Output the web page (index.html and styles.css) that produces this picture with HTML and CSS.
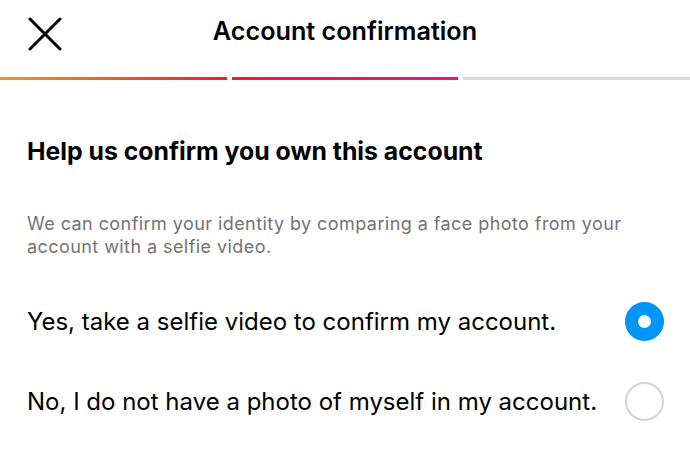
FILE: index.html
```html
<!DOCTYPE html>
<html>
<head>
<meta charset="utf-8">
<link rel="stylesheet" href="styles.css">
</head>
<body>
<div class="screen">
  <header class="topbar">
    <div class="close">
      <svg width="34" height="34" viewBox="0 0 34 34"><path d="M2 2 L32 32 M32 2 L2 32" stroke="#000" stroke-width="3" stroke-linecap="round" fill="none"/></svg>
    </div>
    <h1 class="title">Account confirmation</h1>
  </header>
  <div class="progress">
    <div class="seg seg1"></div>
    <div class="seg seg2"></div>
    <div class="seg seg3"></div>
  </div>
  <main class="content">
    <h2 class="heading">Help us confirm you own this account</h2>
    <p class="desc">We can confirm your identity by comparing a face photo from your account with a selfie video.</p>
    <div class="option first">
      <span class="label">Yes, take a selfie video to confirm my account.</span>
      <span class="radio checked"></span>
    </div>
    <div class="option">
      <span class="label">No, I do not have a photo of myself in my account.</span>
      <span class="radio"></span>
    </div>
  </main>
</div>
</body>
</html>
```
FILE: styles.css
```css
html, body {
  margin: 0;
  padding: 0;
  background: #fff;
}
body {
  font-family: Inter, Roboto, "Liberation Sans", sans-serif;
  color: #000;
  width: 690px;
  height: 468px;
  overflow: hidden;
}
.topbar {
  height: 77px;
  display: flex;
  align-items: center;
  justify-content: center;
  position: relative;
}
.close {
  position: absolute;
  left: 28px;
  top: 17px;
  width: 34px;
  height: 34px;
}
.title {
  margin: 0 0 15px 0;
  font-size: 25.2px;
  font-weight: 600;
  letter-spacing: 0;
}
.progress {
  display: flex;
  gap: 5px;
  height: 3px;
}
.seg {
  flex: 1;
}
.seg1 { background: linear-gradient(90deg, #f8951a, #ff1a1a); }
.seg2 { background: linear-gradient(90deg, #ff1437, #ff0a8c); }
.seg3 { background: #dbdbdb; }
.content {
  padding: 0 27px;
}
.heading {
  margin: 55px 0 0 0;
  font-size: 24.8px;
  font-weight: 700;
  line-height: 32px;
  letter-spacing: 0;
}
.desc {
  margin: 46px 0 0 0;
  font-size: 18px;
  line-height: 22.5px;
  color: #737373;
  font-weight: 400;
  letter-spacing: 0.43px;
}
.option {
  display: flex;
  align-items: center;
  justify-content: space-between;
  height: 80px;
}
.option.first { margin-top: 23px; }
.label {
  font-size: 24px;
  letter-spacing: 0;
}
.radio {
  flex: none;
  width: 39px;
  height: 39px;
  box-sizing: border-box;
  border-radius: 50%;
  border: 2px solid #d4d4d4;
  margin-right: -1px;
}
.radio.checked {
  border: 13.5px solid #0095f6;
  background: #fff;
}
```
